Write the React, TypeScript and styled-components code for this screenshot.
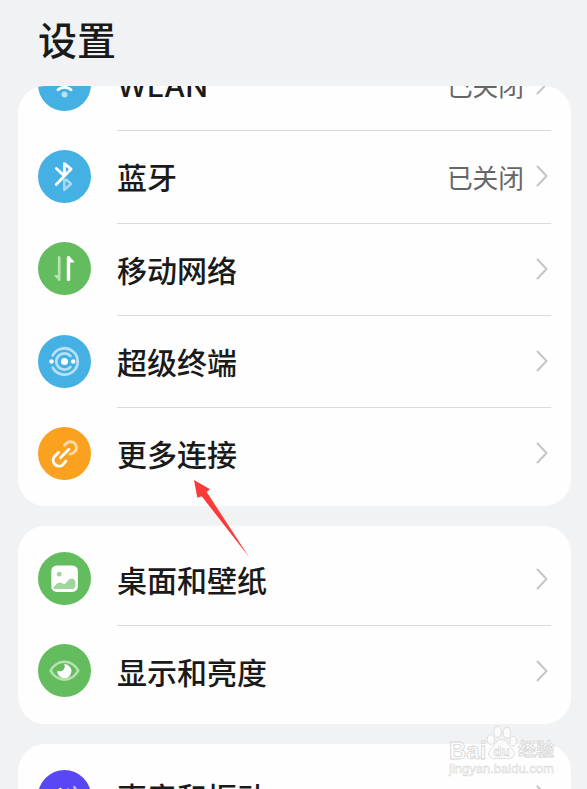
import { ReactNode } from 'react';
import styled, { createGlobalStyle } from 'styled-components';

const BLUE = '#45b0e3';
const GREEN = '#63bc5d';
const ORANGE = '#faa11f';
const PURPLE = '#5847f5';

const WlanIcon = () => (
  <svg viewBox="0 0 53 53" fill="none" stroke="#fff" strokeLinecap="round" strokeWidth="2.8">
    <path d="M14 22a18 18 0 0 1 25 0" />
    <path d="M20 31.8a9.5 9.5 0 0 1 13 0" />
    <circle cx="26.5" cy="36.5" r="3" fill="#b9e1f5" stroke="none" />
  </svg>
);

const BluetoothIcon = () => (
  <svg viewBox="0 0 53 53" fill="none" stroke="#fff" strokeLinecap="round" strokeLinejoin="round">
    <path d="M26.3 30v9.800l6.700-5.900-4.600-4.200" stroke="#a9daf2" strokeWidth="2.6" />
    <path d="M18.400 18.400l8 7.600V13.600l6.700 5.500-14.900 15.300" strokeWidth="2.8" />
  </svg>
);

const NetworkIcon = () => (
  <svg viewBox="0 0 53 53" strokeLinecap="round" strokeLinejoin="round">
    <g fill="#b8e1b4" stroke="#b8e1b4">
      <path d="M21.200 15.300v22.200" strokeWidth="2.7" />
      <path d="M21.200 33.600v4.400l-4.300-4.400z" strokeWidth="1.400" />
    </g>
    <g fill="#fff" stroke="#fff">
      <path d="M30.500 15.600v22" strokeWidth="3.400" />
      <path d="M30.500 14.800v4.900h5z" strokeWidth="1.600" />
    </g>
  </svg>
);

const SuperDeviceIcon = () => (
  <svg viewBox="0 0 53 53" fill="none" stroke="#b7e1f6" strokeLinecap="round" strokeWidth="2.8">
    <path d="M14.8 20.400a13.200 13.200 0 1 1 0 12.200" />
    <path d="M32.400 20.900a8.200 8.200 0 1 0 0 11.200" />
    <g fill="#fff" stroke="none">
      <circle cx="26.5" cy="26.5" r="3.500" />
      <circle cx="13.500" cy="26.5" r="2.200" />
      <circle cx="35.200" cy="26.5" r="2.200" />
    </g>
  </svg>
);

const LinkIcon = () => (
  <svg viewBox="0 0 53 53" fill="none" stroke="#fff" strokeLinecap="round" strokeWidth="2.9">
    <path
      d="M26.500 18.200l1.900-1.800a5.900 5.900 0 0 1 8.300 8.400c-1.500 1.400-3 2.200-4.700 2.300"
      stroke="#fddba8"
    />
    <path d="M20.500 25.500l-4 4a5.900 5.900 0 0 0 8.300 8.300l3.100-3.700" />
    <path d="M22.700 30.600l8.200-8.400" />
  </svg>
);

const WallpaperIcon = () => (
  <svg viewBox="0 0 53 53">
    <rect x="13.300" y="13.500" width="26.600" height="26.400" rx="5.500" fill="#fff" />
    <circle cx="21.200" cy="22.200" r="2.400" fill="#9fd69b" />
    <path
      d="M15.500 36.200c1-2.600 4-5.600 6.400-5.600 2 0 3 2 4.500 1.400 2-.8 4-5.600 7.200-5.600 2.600 0 4 2.400 4 5 0 3-1 5.600-3.400 5.600H17c-1 0-1.800-.2-1.500-.8z"
      fill="#9fd69b"
    />
  </svg>
);

const EyeIcon = () => (
  <svg viewBox="0 0 53 53">
    <path
      d="M12.500 26.700c3.200-5.400 8.300-8.900 13.900-8.900s10.700 3.500 13.900 8.900c-3.200 5.500-8.300 9-13.900 9s-10.700-3.500-13.900-9z"
      fill="none"
      stroke="#b8e1b4"
      strokeWidth="2.600"
      strokeLinejoin="round"
    />
    <path
      d="M26.200 20.100a7.100 7.100 0 1 1-6.900 6.300c1.200 1 3 1.200 4.300.7 2.800-.9 3.800-4.400 2.600-7z"
      fill="#fff"
    />
  </svg>
);

const SoundIcon = () => (
  <svg viewBox="0 0 53 53" fill="none" strokeLinecap="round" strokeLinejoin="round" strokeWidth="2.500">
    <path d="M14 23.500h3.500l5-4.500v15.500l-5-4H14z" fill="#fff" stroke="#fff" />
    <path d="M30 19.500c1.200 1.200 2 2.600 2.300 4M36.300 17c1.400 1.800 2.300 3.600 2.700 5.500" stroke="#bdb6fb" />
  </svg>
);

const Chevron = () => (
  <ChevronSvg viewBox="0 0 14 24">
    <path d="M2.500 2.500l9 9.500-9 9.500" />
  </ChevronSvg>
);

interface Item {
  label: string;
  color: string;
  icon: ReactNode;
  value?: string;
  latin?: boolean;
}

const connectionItems: Item[] = [
  { label: 'WLAN', color: BLUE, icon: <WlanIcon />, value: '已关闭', latin: true },
  { label: '蓝牙', color: BLUE, icon: <BluetoothIcon />, value: '已关闭' },
  { label: '移动网络', color: GREEN, icon: <NetworkIcon /> },
  { label: '超级终端', color: BLUE, icon: <SuperDeviceIcon /> },
  { label: '更多连接', color: ORANGE, icon: <LinkIcon /> },
];

const displayItems: Item[] = [
  { label: '桌面和壁纸', color: GREEN, icon: <WallpaperIcon /> },
  { label: '显示和亮度', color: GREEN, icon: <EyeIcon /> },
];

const soundItems: Item[] = [{ label: '声音和振动', color: PURPLE, icon: <SoundIcon /> }];

const SettingsCard = ({ items, scrolled = 0 }: { items: Item[]; scrolled?: number }) => (
  <Card>
    <List $scrolled={scrolled}>
      {items.map(({ label, color, icon, value, latin }) => (
        <Row key={label}>
          <IconCircle $color={color}>{icon}</IconCircle>
          <RowBody>
            <Label $latin={latin}>{label}</Label>
            {value && <Value>{value}</Value>}
            <Chevron />
          </RowBody>
        </Row>
      ))}
    </List>
  </Card>
);

export default function App() {
  return (
    <>
      <GlobalStyle />
      <Screen>
        <Title>设置</Title>
        <Cards>
          <SettingsCard items={connectionItems} scrolled={54.6} />
          <SettingsCard items={displayItems} />
          <SettingsCard items={soundItems} />
        </Cards>
        <Pointer viewBox="0 0 56 78">
          <path d="M1 1l16 9.300-3.300 2.700L56 78 8.700 17.200l-4.400 1.500z" />
        </Pointer>
        <Watermark>
          <Brand>
            <span>Bai</span>
            <Paw viewBox="0 0 32 36">
              <ellipse cx="5" cy="14.500" rx="4" ry="5" />
              <ellipse cx="12" cy="6.500" rx="4" ry="5.500" />
              <ellipse cx="21.500" cy="7.500" rx="4" ry="5.500" />
              <ellipse cx="28" cy="16" rx="3.500" ry="5" />
              <path d="M16 14.500c5 0 6 4 9 7.500 3 3 5 5 4 8.500-1 3.500-5 4-8 3.500h-9c-4 .6-8 0-9-3.500-1-3.500 1.500-6 4-8.500 3-3.500 4-7.500 9-7.500z" />
              <text x="16" y="31" textAnchor="middle">du</text>
            </Paw>
            <BrandCn>经验</BrandCn>
          </Brand>
          <Site>jingyan.baidu.com</Site>
        </Watermark>
      </Screen>
    </>
  );
}

const GlobalStyle = createGlobalStyle`
  * {
    box-sizing: border-box;
  }
  body {
    margin: 0;
    background: #f1f2f4;
    font-family: 'Noto Sans CJK SC', 'Noto Sans', sans-serif;
    color: #1a1a1a;
  }
`;

const Screen = styled.main`
  position: relative;
  display: flex;
  flex-direction: column;
  height: 789px;
  overflow: hidden;
`;

const Title = styled.h1`
  flex: none;
  height: 86.300px;
  margin: 0;
  padding: 10px 0 0 38px;
  font-size: 39px;
  font-weight: 500;
  line-height: 56px;
`;

const Cards = styled.div`
  display: flex;
  flex-direction: column;
  gap: 20px;
  padding: 0 16px 0 18px;
`;

const Card = styled.section`
  flex: none;
  padding: 6.300px 20px 6.600px 19.500px;
  border-radius: 27px;
  background: #fefefe;
  overflow: hidden;
`;

const List = styled.ul<{ $scrolled: number }>`
  margin: ${({ $scrolled }) => -$scrolled}px 0 0;
  padding: 0;
  list-style: none;
`;

const RowBody = styled.div`
  flex: 1;
  align-self: flex-start;
  display: flex;
  align-items: center;
  height: calc(100% + 1px);
  border-bottom: 1px solid #d9dadb;
`;

const Row = styled.li`
  display: flex;
  align-items: center;
  gap: 26px;
  height: 92.300px;
  &:last-child ${RowBody} {
    border-bottom-color: transparent;
  }
`;

const IconCircle = styled.div<{ $color: string }>`
  flex: none;
  width: 53px;
  height: 53px;
  border-radius: 50%;
  background: ${({ $color }) => $color};
  svg {
    display: block;
    width: 100%;
    height: 100%;
  }
`;

const Label = styled.span<{ $latin?: boolean }>`
  flex: 1;
  padding-top: ${({ $latin }) => ($latin ? 3 : 0)}px;
  padding-left: 0.500px;
  font-family: ${({ $latin }) => ($latin ? "Inter, 'Noto Sans', sans-serif" : 'inherit')};
  font-size: 30px;
  font-weight: 500;
  line-height: 44px;
`;

const Value = styled.span`
  margin-right: 11px;
  padding-top: 1px;
  font-size: 25.700px;
  line-height: 38px;
  color: #666;
`;

const ChevronSvg = styled.svg`
  flex: none;
  width: 14px;
  height: 24px;
  margin-right: 2px;
  fill: none;
  stroke: #c4c5c6;
  stroke-width: 2;
  stroke-linecap: round;
  stroke-linejoin: round;
`;

const Pointer = styled.svg`
  position: absolute;
  left: 193px;
  top: 479px;
  width: 56px;
  height: 78px;
  fill: #fb3a3a;
`;

const Watermark = styled.div`
  position: absolute;
  left: 449px;
  top: 725px;
  width: 110px;
  color: #fbfbfb;
  font-family: 'Liberation Sans', 'Noto Sans CJK SC', sans-serif;
  white-space: nowrap;
  -webkit-text-stroke: 0.800px #d6d6d7;
`;

const Brand = styled.div`
  display: flex;
  align-items: flex-end;
  height: 36px;
  font-size: 24px;
  font-weight: 700;
  line-height: 21px;
`;

const Paw = styled.svg`
  flex: none;
  width: 31px;
  height: 36px;
  fill: #fbfbfb;
  stroke: #dcdcdd;
  stroke-width: 1;
  text {
    font-size: 14px;
    stroke-width: 0.800;
  }
`;

const BrandCn = styled.span`
  margin-left: 1px;
  font-size: 18px;
`;

const Site = styled.div`
  margin-top: 1px;
  font-size: 13px;
  line-height: 14px;
  -webkit-text-stroke-width: 0.500px;
`;
